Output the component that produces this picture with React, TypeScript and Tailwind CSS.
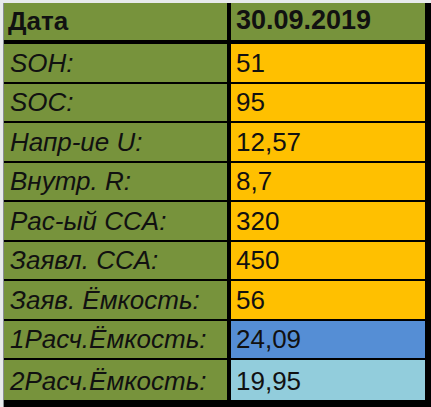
const rows: { label: string; value: string; bg: string }[] = [
  { label: "SOH:", value: "51", bg: "bg-[#ffc000]" },
  { label: "SOC:", value: "95", bg: "bg-[#ffc000]" },
  { label: "Напр-ие U:", value: "12,57", bg: "bg-[#ffc000]" },
  { label: "Внутр. R:", value: "8,7", bg: "bg-[#ffc000]" },
  { label: "Рас-ый CCA:", value: "320", bg: "bg-[#ffc000]" },
  { label: "Заявл. CCA:", value: "450", bg: "bg-[#ffc000]" },
  { label: "Заяв. Ёмкость:", value: "56", bg: "bg-[#ffc000]" },
  { label: "1Расч.Ёмкость:", value: "24,09", bg: "bg-[#558ed5]" },
  { label: "2Расч.Ёмкость:", value: "19,95", bg: "bg-[#92cddc]" },
]

export default function App() {
  return (
    <div
      className="w-[431px] h-[407px] overflow-hidden bg-[#e8eaec] pt-[3px] pl-[3px] text-[#111]"
      style={{ fontFamily: '"Liberation Sans", Arial, sans-serif' }}
    >
      <div className="w-[428px] border-l border-[#8a8f93]">
        <div className="border-r-[6px] border-b-[7px] border-black">
          {/* header */}
          <div className="flex h-[41px] border-b-4 border-black">
            <div className="w-[227px] bg-[#77933c] border-r-4 border-black flex items-end px-[4px] pb-[6px]">
              <span className="text-[26px] font-bold leading-none">Дата</span>
            </div>
            <div className="flex-1 bg-[#77933c] flex items-end px-[5px] pb-[6px]">
              <span className="text-[27px] font-bold leading-none">30.09.2019</span>
            </div>
          </div>

          {rows.map((r, i) => (
            <div
              key={r.label}
              className={`flex h-[39.5px] ${i < rows.length - 1 ? "border-b-2 border-black" : ""}`}
            >
              <div className="w-[227px] bg-[#77933c] border-r-4 border-black flex items-end px-[6px] pb-[6px]">
                <span className="text-[26px] italic leading-none">{r.label}</span>
              </div>
              <div className={`flex-1 ${r.bg} flex items-end px-[5px] pb-[6px]`}>
                <span className="text-[26px] leading-none">{r.value}</span>
              </div>
            </div>
          ))}
        </div>
      </div>
    </div>
  )
}
